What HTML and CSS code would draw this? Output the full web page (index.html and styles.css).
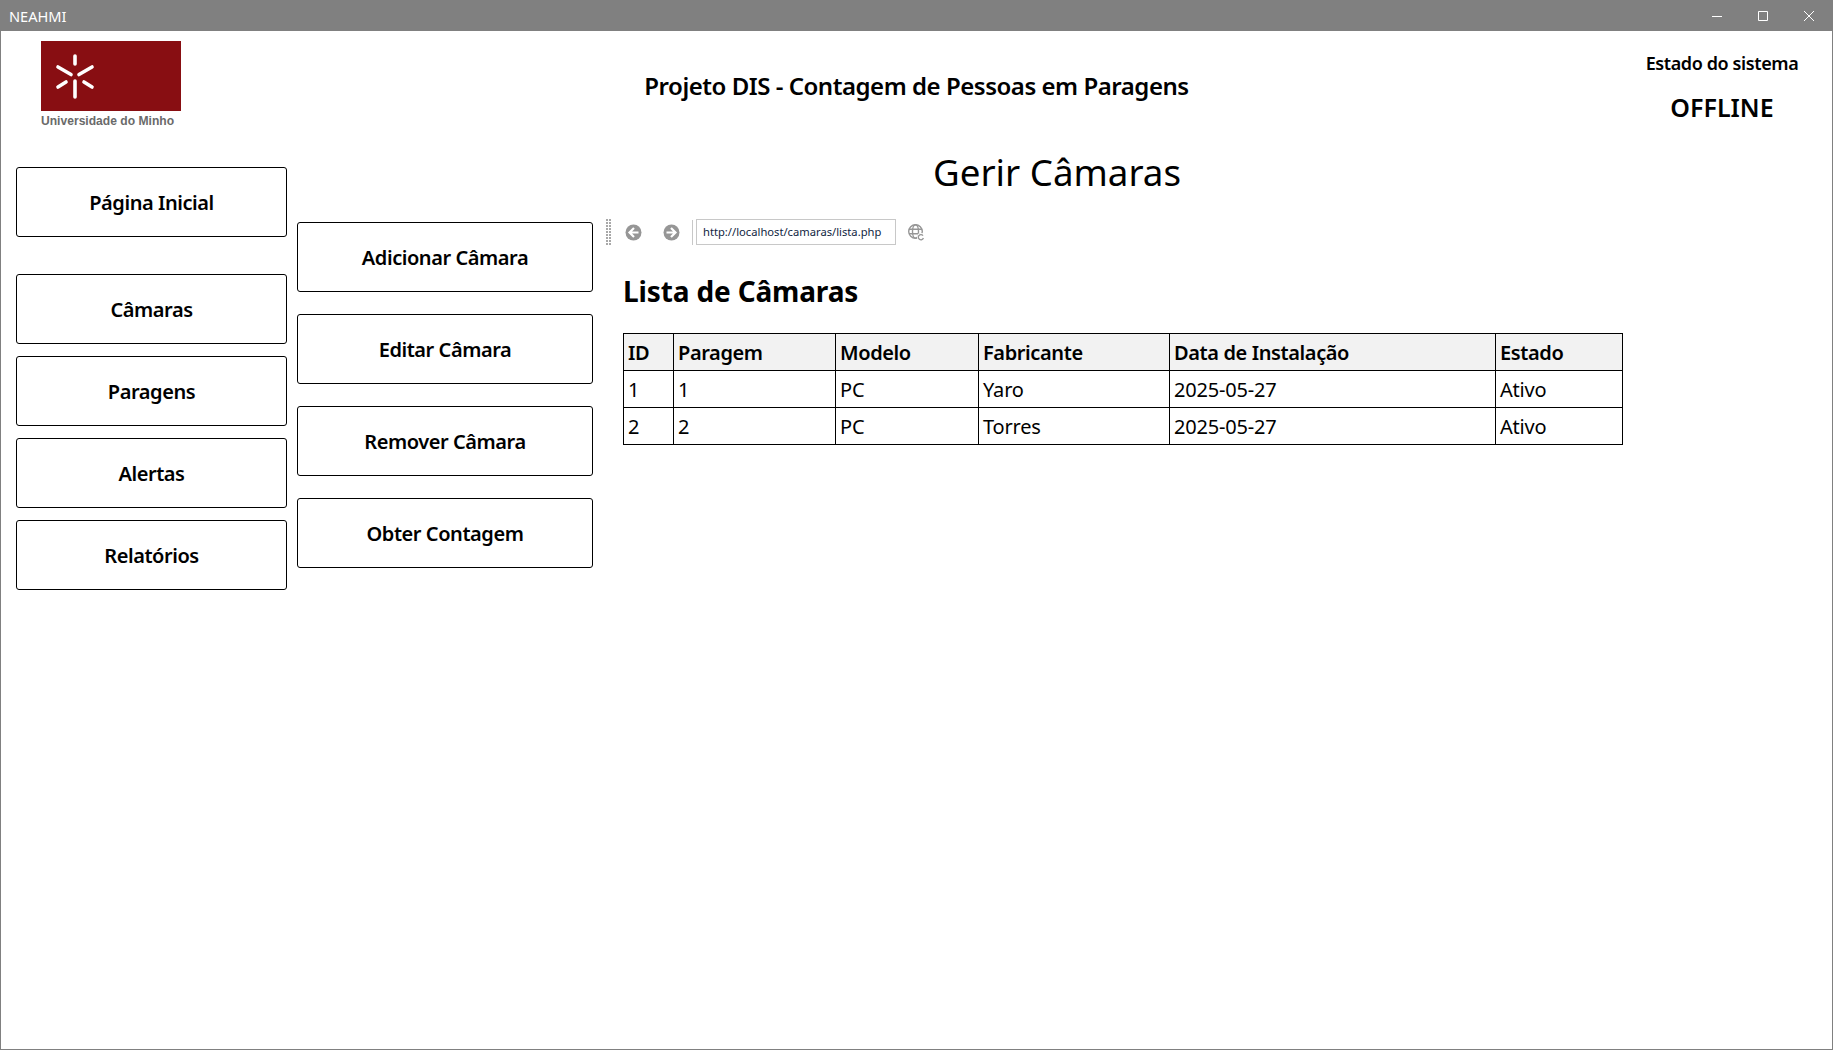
FILE: index.html
```html
<!DOCTYPE html>
<html lang="pt">
<head>
    <meta charset="UTF-8">
    <title>NEAHMI</title>
    <link rel="stylesheet" href="styles.css">
</head>
<body>

<div class="window">
    <div class="titlebar">
        <span class="app-name">NEAHMI</span>
        <div class="window-controls">
            <svg width="12" height="12" viewBox="0 0 12 12"><path d="M1 6.5H11" stroke="#fff" fill="none"/></svg>
            <svg width="12" height="12" viewBox="0 0 12 12"><path d="M1.5 1.5H10.5V10.5H1.5Z" stroke="#fff" fill="none"/></svg>
            <svg width="12" height="12" viewBox="0 0 12 12"><path d="M1 1L11 11M11 1L1 11" stroke="#fff" fill="none"/></svg>
        </div>
    </div>

    <div class="content">
        <header class="top">
            <div class="logo">
                <div class="logo-box">
                    <svg width="46" height="52" viewBox="0 0 46 52">
                        <g stroke="#fff" stroke-width="3.6" stroke-linecap="round">
                            <path d="M22 5V13"/>
                            <path d="M22 30V46"/>
                            <path d="M5 16L18 23.5"/>
                            <path d="M39 16L26 23.5"/>
                            <path d="M5 36L13 31"/>
                            <path d="M39 36L31 31"/>
                        </g>
                    </svg>
                </div>
                <div class="logo-text">Universidade do Minho</div>
            </div>
            <h1 class="project-title">Projeto DIS - Contagem de Pessoas em Paragens</h1>
            <div class="status">
                <div class="status-label">Estado do sistema</div>
                <div class="status-value">OFFLINE</div>
            </div>
        </header>

        <div class="main">
            <nav class="nav">
                <button class="btn home">Página Inicial</button>
                <button class="btn">Câmaras</button>
                <button class="btn">Paragens</button>
                <button class="btn">Alertas</button>
                <button class="btn">Relatórios</button>
            </nav>

            <div class="actions">
                <button class="btn">Adicionar Câmara</button>
                <button class="btn">Editar Câmara</button>
                <button class="btn">Remover Câmara</button>
                <button class="btn">Obter Contagem</button>
            </div>

            <section class="panel">
                <h2 class="page-title">Gerir Câmaras</h2>

                <div class="toolbar">
                    <div class="grip"></div>
                    <svg class="nav-icon" width="17" height="17" viewBox="0 0 17 17">
                        <circle cx="8.5" cy="8.5" r="8" fill="#969696"/>
                        <path d="M13.5 8.5H5M9 4L4.5 8.5L9 13" stroke="#fff" stroke-width="2.2" fill="none"/>
                    </svg>
                    <svg class="nav-icon" width="17" height="17" viewBox="0 0 17 17">
                        <circle cx="8.5" cy="8.5" r="8" fill="#969696"/>
                        <path d="M3.5 8.5H12M8 4L12.5 8.5L8 13" stroke="#fff" stroke-width="2.2" fill="none"/>
                    </svg>
                    <div class="separator"></div>
                    <div class="address">http://localhost/camaras/lista.php</div>
                    <svg class="go-icon" width="17" height="17" viewBox="0 0 17 17">
                        <g stroke="#969696" stroke-width="1.4" fill="none">
                            <circle cx="7.5" cy="7.5" r="6.8"/>
                            <ellipse cx="7.5" cy="7.5" rx="3" ry="6.8"/>
                            <path d="M1 5.2H14M1 9.8H14"/>
                        </g>
                        <circle cx="13" cy="13" r="4" fill="#fff"/>
                        <path d="M15 11.6A2.6 2.6 0 1 0 15.4 14" stroke="#969696" stroke-width="1.3" fill="none"/>
                    </svg>
                </div>

                <div class="page">
                    <h3 class="list-title">Lista de Câmaras</h3>
                    <table class="cameras">
                        <thead>
                            <tr>
                                <th class="col-id">ID</th>
                                <th class="col-stop">Paragem</th>
                                <th class="col-model">Modelo</th>
                                <th class="col-maker">Fabricante</th>
                                <th class="col-date">Data de Instalação</th>
                                <th>Estado</th>
                            </tr>
                        </thead>
                        <tbody>
                            <tr><td>1</td><td>1</td><td>PC</td><td>Yaro</td><td>2025-05-27</td><td>Ativo</td></tr>
                            <tr><td>2</td><td>2</td><td>PC</td><td>Torres</td><td>2025-05-27</td><td>Ativo</td></tr>
                        </tbody>
                    </table>
                </div>
            </section>
        </div>
    </div>
</div>

</body>
</html>
```

FILE: styles.css
```css
/* Window */
* {
    box-sizing: border-box;
}

html, body {
    height: 100%;
}

body {
    margin: 0;
    background-color: #ffffff;
    color: #000000;
    font-family: "Noto Sans", "Open Sans", sans-serif;
    overflow: hidden;
}

.window {
    height: 100%;
    display: flex;
    flex-direction: column;
    border: 1px solid #808080;
    border-top: none;
}

.titlebar {
    height: 31px;
    flex-shrink: 0;
    background-color: #808080;
    color: #ffffff;
    display: flex;
    justify-content: space-between;
    align-items: center;
    padding: 0 17px 0 8px;
}

.app-name {
    font-size: 14.6px;
}

.window-controls {
    display: flex;
    gap: 34px;
}

.content {
    flex: 1;
    display: flex;
    flex-direction: column;
}

/* Header */
.top {
    display: grid;
    grid-template-columns: 1fr auto 1fr;
    height: 136px;
}

.logo {
    padding: 10px 0 0 40px;
}

.logo-box {
    width: 140px;
    height: 70px;
    background-color: #880e12;
    padding: 10px 0 0 12px;
}

.logo-box svg {
    display: block;
}

.logo-text {
    margin-top: 3px;
    font-family: "Liberation Sans", sans-serif;
    font-size: 12.1px;
    font-weight: bold;
    color: #6a6a6a;
}

.project-title {
    margin: 38px 0 0;
    font-size: 24px;
    line-height: 34px;
    font-weight: 600;
    letter-spacing: -0.47px;
}

.status {
    justify-self: end;
    width: 220px;
    padding: 20px 0 0;
    text-align: center;
}

.status-label {
    font-size: 18px;
    line-height: 25px;
    font-weight: 600;
    letter-spacing: -0.4px;
}

.status-value {
    margin-top: 14px;
    font-size: 25px;
    line-height: 34px;
    font-weight: 600;
}

/* Buttons */
.main {
    flex: 1;
    display: flex;
    align-items: flex-start;
}

.btn {
    display: block;
    background-color: #ffffff;
    border: 1px solid #000000;
    border-radius: 3px;
    color: #000000;
    font-family: inherit;
    font-size: 20px;
    font-weight: 600;
    letter-spacing: -0.44px;
    height: 70px;
    padding: 0;
    width: 100%;
}

.nav {
    width: 271px;
    margin-left: 15px;
    display: flex;
    flex-direction: column;
    gap: 12px;
}

.nav .home {
    margin-bottom: 25px;
}

.actions {
    width: 296px;
    margin: 55px 0 0 10px;
    display: flex;
    flex-direction: column;
    gap: 22px;
}

/* Browser panel */
.panel {
    flex: 1;
    margin: -20px 0 0 13px;
}

.page-title {
    margin: 0;
    padding-right: 324px;
    text-align: center;
    font-size: 36.7px;
    line-height: 50px;
    font-weight: 400;
}

.toolbar {
    display: flex;
    align-items: center;
    height: 28px;
    margin-top: 21px;
}

.grip {
    width: 5px;
    height: 26px;
    background: radial-gradient(circle at 1px 1px, #a8a8a8 1px, transparent 1px) 0 0 / 3px 3px;
    margin-right: 14px;
}

.nav-icon {
    margin-right: 21px;
}

.nav-icon + .nav-icon {
    margin-right: 12px;
}

.separator {
    width: 1px;
    height: 25px;
    background-color: #c8c8c8;
    margin-right: 3px;
}

.address {
    width: 200px;
    height: 26px;
    border: 1px solid #c8c8c8;
    font-size: 11.2px;
    line-height: 24px;
    padding-left: 6px;
    white-space: nowrap;
    color: #10253f;
}

.go-icon {
    margin-left: 12px;
}

.page {
    margin-left: 17px;
}

.list-title {
    margin: 26px 0 0;
    font-size: 28px;
    line-height: 38px;
    font-weight: 700;
    letter-spacing: -0.15px;
}

.cameras {
    margin-top: 23px;
    width: 1000px;
    table-layout: fixed;
    border-collapse: collapse;
    font-size: 20px;
}

.cameras th,
.cameras td {
    border: 1px solid #000000;
    height: 37px;
    padding: 1px 4px 0;
    text-align: left;
    white-space: nowrap;
}

.cameras th {
    background-color: #f2f2f2;
    font-weight: 600;
    letter-spacing: -0.39px;
}

.cameras td {
    letter-spacing: -0.2px;
}

.col-id { width: 50px; }
.col-stop { width: 162px; }
.col-model { width: 143px; }
.col-maker { width: 191px; }
.col-date { width: 326px; }
```
